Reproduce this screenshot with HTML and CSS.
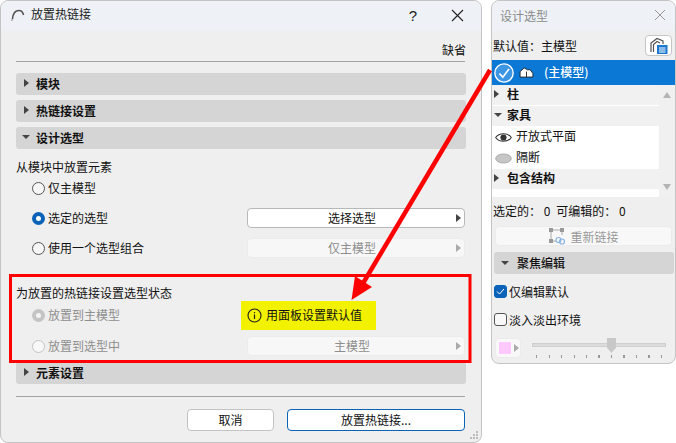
FILE: index.html
```html
<!DOCTYPE html>
<html lang="zh">
<head>
<meta charset="utf-8">
<link rel="stylesheet" href="styles.css">
</head>
<body>
<div class="desk">
  <section class="dialog">
    <header class="titlebar">
      <svg class="appicon" width="14" height="14" viewBox="0 0 14 14"><path d="M1.500 11 C2 5 5 2.500 8 2.500 C10.500 2.500 12 4.500 12.500 7" fill="none" stroke="#555" stroke-width="1.600"/><path d="M1 11 L1 13" stroke="#aaa" stroke-width="1.500"/></svg>
      <span class="title">放置热链接</span>
      <span class="help">?</span>
      <svg class="close" width="13" height="13" viewBox="0 0 13 13"><path d="M1 1 L12 12 M12 1 L1 12" stroke="#222" stroke-width="1.100"/></svg>
    </header>
    <div class="body">
      <div class="defaultrow">缺省</div>
      <div class="sep"></div>
      <div class="bars">
        <div class="bar"><i class="tri-r"></i>模块</div>
        <div class="bar"><i class="tri-r"></i>热链接设置</div>
        <div class="bar"><i class="tri-d"></i>设计选型</div>
      </div>
      <div class="label from">从模块中放置元素</div>
      <div class="optrow first"><span class="radio"></span><span>仅主模型</span></div>
      <div class="optrow"><span class="radio on"></span><span>选定的选型</span><button class="pick">选择选型<i class="tri-r"></i></button></div>
      <div class="optrow"><span class="radio"></span><span>使用一个选型组合</span><button class="pick off">仅主模型<i class="tri-r"></i></button></div>
      <div class="label state">为放置的热链接设置选型状态</div>
      <div class="optrow first2 dim"><span class="radio donut"></span><span>放置到主模型</span>
        <div class="notice"><svg width="15" height="15" viewBox="0 0 15 15"><circle cx="7.500" cy="7.500" r="6.500" fill="none" stroke="#222" stroke-width="1.100"/><path d="M7.500 6.500 V11 M7.500 4 V5.200" stroke="#222" stroke-width="1.200"/></svg><span>用面板设置默认值</span></div>
      </div>
      <div class="optrow second2 dim"><span class="radio blank"></span><span>放置到选型中</span><button class="pick off">主模型<i class="tri-r"></i></button></div>
      <div class="bar last"><i class="tri-r"></i>元素设置</div>
      <div class="sep low"></div>
      <div class="actions">
        <button class="btn cancel">取消</button>
        <button class="btn primary">放置热链接...</button>
      </div>
    </div>
    <svg class="grip" width="10" height="10" viewBox="0 0 10 10"><path d="M7 1h2v2H7zM4 4h2v2H4zM7 4h2v2H7zM1 7h2v2H1zM4 7h2v2H4zM7 7h2v2H7z" fill="#bbb"/></svg>
  </section>

  <aside class="panel">
    <header class="ptitle">
      <span>设计选型</span>
      <svg width="12" height="12" viewBox="0 0 12 12"><path d="M1 1 L11 11 M11 1 L1 11" stroke="#999" stroke-width="1"/></svg>
    </header>
    <div class="pbody">
      <div class="pdefault"><span>默认值：主模型</span>
        <button class="iconbtn"><svg width="20" height="20" viewBox="0 0 20 20"><path d="M2 16 V7 L8 2.500 L14 5 V8 M4.500 16 V8.500 L8 5.500 L11 7" fill="none" stroke="#555" stroke-width="1.200"/><rect x="8" y="9" width="10.500" height="9" fill="#1a78d0"/><path d="M10 12 H16.500 M10 14 H16.500 M10 16 H16.500" stroke="#fff" stroke-width="1"/></svg></button>
      </div>
      <div class="selrow">
        <svg width="22" height="22" viewBox="0 0 24 24"><circle cx="12" cy="12" r="10" fill="#3d96e4" stroke="#fff" stroke-width="1.500"/><path d="M7 12.500 L10.700 16.500 L17.500 7.500" fill="none" stroke="#fff" stroke-width="1.800"/></svg>
        <svg class="house" width="15" height="11" viewBox="0 0 16 12"><path d="M1 11 V5 L5.500 1 L9 3 H12 L15 7 V11 Z" fill="#fff" stroke="#222" stroke-width="1"/><path d="M8 11 V5" stroke="#222" stroke-width="1"/></svg>
        <span>(主模型)</span>
      </div>
      <div class="listwrap">
        <div class="list">
          <div class="group"><i class="tri-r"></i>柱</div>
          <div class="group"><i class="tri-d"></i>家具</div>
          <div class="item"><svg width="17" height="11" viewBox="0 0 17 11"><path d="M.700 5.500 C4 .500 13 .500 16.300 5.500 C13 10.500 4 10.500 .700 5.500 Z" fill="#fff" stroke="#333" stroke-width="1.100"/><circle cx="8.500" cy="5.500" r="3.100" fill="#333"/></svg>开放式平面</div>
          <div class="item"><svg width="17" height="11" viewBox="0 0 17 11"><ellipse cx="8.500" cy="5.500" rx="7.800" ry="4.500" fill="#c6c6c6" stroke="#aaa" stroke-width="1"/></svg>隔断</div>
          <div class="group"><i class="tri-r"></i>包含结构</div>
        </div>
        <div class="scroll"><i class="up"></i><i class="down"></i></div>
      </div>
      <div class="counts"><span>选定的： 0</span><span>可编辑的： 0</span></div>
      <button class="relink">
        <svg width="18" height="18" viewBox="0 0 18 18"><path d="M2.500 3 H14 M3 3 V14 H8 M14 3 V8" fill="none" stroke="#aaa" stroke-width="1"/><path d="M1 1h4v4H1zM12 1h4v4h-4zM1 12h4v4H1z" fill="#999"/><circle cx="10.500" cy="13" r="2.500" fill="none" stroke="#8ab4e0" stroke-width="1.200"/><circle cx="14" cy="14.500" r="2.500" fill="none" stroke="#8ab4e0" stroke-width="1.200"/></svg>
        <span>重新链接</span>
      </button>
      <div class="pbar"><i class="tri-d"></i>聚焦编辑</div>
      <div class="check one"><span class="box on"><svg width="13" height="13" viewBox="0 0 13 13"><path d="M3 6.500 L5.500 9 L10 4" fill="none" stroke="#fff" stroke-width="1"/></svg></span>仅编辑默认</div>
      <div class="check two"><span class="box"></span>淡入淡出环境</div>
      <div class="sliderrow">
        <div class="swatch"><b></b><i class="tri-r"></i></div>
        <div class="slider"><div class="track"></div><div class="thumb"></div><div class="ticks"></div></div>
      </div>
    </div>
  </aside>

  <svg class="annot" width="676" height="443" viewBox="0 0 676 443">
    <rect x="10.500" y="275.500" width="459.500" height="86" fill="none" stroke="#f00" stroke-width="3"/>
    <path d="M490 70 L362 285" stroke="#f00" stroke-width="4.500" fill="none"/>
    <path d="M351.500 300 L355 276 L372 287 Z" fill="#f00"/>
  </svg>
</div>
</body>
</html>
```

FILE: styles.css
```css
* { box-sizing: border-box; }
html, body { margin: 0; padding: 0; background: #fff; }
body { font-family: "Noto Sans CJK SC", "Liberation Sans", sans-serif; font-size: 12px; color: #111; }
button { font: inherit; color: inherit; padding: 0; }
.desk { position: relative; width: 676px; height: 443px; overflow: hidden; }

.dialog { position: absolute; left: 0; top: 0; width: 482px; height: 443px; background: #efefef; border: 1px solid #c4c4c4; border-radius: 8px; overflow: hidden; display: flex; flex-direction: column; }
.titlebar { height: 30px; flex: none; background: #eef2f7; display: flex; align-items: center; padding: 0 0 2px 10px; }
.appicon { margin-right: 6px; }
.title { font-size: 12px; color: #222; line-height: 16px; padding-bottom: 2px; }
.help { margin-left: auto; font-family: "Liberation Sans", sans-serif; font-size: 15px; margin-right: 34px; color: #222; }
.close { margin-right: 17px; }
.body { flex: 1; padding: 0 15px; display: flex; flex-direction: column; }
.defaultrow { height: 30px; text-align: right; line-height: 38px; font-size: 12px; }
.sep { height: 1px; background: #a4a4a4; width: 449px; flex: none; }
.bars { display: flex; flex-direction: column; gap: 5px; margin-top: 11px; }
.bar { height: 22px; width: 450px; background: #d5d5d5; border-radius: 3px; display: flex; align-items: center; font-weight: 700; font-size: 12px; flex: none; padding: 0 0 2px 8px; }
.bar i { margin-right: 7px; }
.tri-r { display: inline-block; width: 0; height: 0; border-left: 5px solid #444; border-top: 4px solid transparent; border-bottom: 4px solid transparent; }
.tri-d { display: inline-block; width: 0; height: 0; border-top: 4px solid #444; border-left: 4px solid transparent; border-right: 4px solid transparent; }
.bar .tri-r { margin-right: 7px; }
.bar .tri-d { margin-left: -2px; margin-right: 6px; }
.label { font-size: 12px; line-height: 18px; }
.from { margin-top: 9px; }
.state { margin-top: 25px; }
.optrow { height: 22px; margin-top: 8px; display: flex; align-items: center; padding-left: 16px; flex: none; width: 450px; position: relative; }
.optrow.first { margin-top: 1px; }
.optrow.first2 { margin-top: 2px; }
.optrow.second2 { margin-top: 9px; }
.optrow > span:nth-child(2) { margin-left: 3px; padding-bottom: 2px; }
.dim { color: #8e8e8e; }
.radio { width: 13px; height: 13px; border-radius: 50%; border: 1px solid #555; background: #f6f6f6; flex: none; }
.radio.on { border: 0; background: #0a63b8; position: relative; }
.radio.on::after { content: ""; position: absolute; left: 4px; top: 4px; width: 5px; height: 5px; border-radius: 50%; background: #fff; }
.radio.donut { border: 0; background: #c4c4c4; position: relative; }
.radio.donut::after { content: ""; position: absolute; left: 4px; top: 4px; width: 5px; height: 5px; border-radius: 50%; background: #f4f4f4; }
.radio.blank { border-color: #c4c4c4; background: #f8f8f8; }
.pick { margin-left: auto; margin-right: 1px; width: 218px; height: 20px; border: 1px solid #b8b8b8; border-radius: 4px; background: #fff; display: flex; align-items: center; justify-content: center; position: relative; font-size: 12px; padding: 0 8px 2px 0; }
.pick .tri-r { position: absolute; right: 3px; top: 5px; border-left-color: #444; }
.pick.off { background: #f7f7f7; border-color: #ebebeb; color: #8e8e8e; }
.pick.off .tri-r { border-left-color: #aaa; }
.notice { position: absolute; left: 225px; top: -3px; width: 135px; height: 29px; background: #f1f100; color: #111; display: flex; align-items: center; padding-left: 6px; gap: 4px; }
.notice span { padding-bottom: 2px; }
.last { margin-top: 5px; }
.low { margin-top: 12px; }
.actions { display: flex; margin-top: 12px; }
.btn { height: 22px; border-radius: 4px; background: #fff; font-size: 12px; padding-bottom: 2px; }
.cancel { width: 87px; margin-left: 171px; border: 1px solid #c2c2c2; }
.primary { width: 178px; margin-left: 13px; border: 1px solid #0a63b8; }
.grip { position: absolute; right: 2px; bottom: 2px; }

.panel { position: absolute; left: 491px; top: 0; width: 185px; height: 364px; background: #efefef; border: 1px solid #c4c4c4; border-radius: 8px; overflow: hidden; display: flex; flex-direction: column; }
.ptitle { height: 30px; flex: none; background: #eef2f7; display: flex; align-items: center; justify-content: space-between; padding: 0 9px 2px 8px; color: #8a8a8a; font-size: 12px; }
.pbody { flex: 1; display: flex; flex-direction: column; }
.pdefault { height: 29px; flex: none; display: flex; align-items: center; justify-content: space-between; padding: 0 3px 0 1px; font-size: 12px; }
.iconbtn { width: 27px; height: 21px; background: #fff; border: 1px solid #c6c6c6; border-radius: 4px; display: flex; align-items: center; justify-content: center; }
.selrow { height: 25px; flex: none; background: #0a78d4; color: #fff; display: flex; align-items: center; padding-left: 1px; font-size: 12px; font-weight: 500; }
.house { margin-left: 4px; margin-right: 10px; }
.selrow span { padding-bottom: 2px; }
.listwrap { height: 112px; flex: none; display: flex; background: #fff; }
.list { width: 167px; display: flex; flex-direction: column; gap: 1px; }
.group { height: 20px; background: #f1f1f1; display: flex; align-items: center; font-weight: 700; font-size: 12px; padding: 0 0 3px 2px; flex: none; }
.group .tri-r { margin-right: 8px; }
.group .tri-d { margin-right: 5px; }
.item { height: 20px; background: #fff; display: flex; align-items: center; padding: 0 0 3px 3px; gap: 4px; font-size: 12px; flex: none; }
.item svg { margin-top: 3px; }
.scroll { flex: 1; background: #f0f0f0; position: relative; }
.up { position: absolute; left: 4px; top: 7px; width: 0; height: 0; border-bottom: 6px solid #b4b4b4; border-left: 4px solid transparent; border-right: 4px solid transparent; }
.down { position: absolute; left: 4px; bottom: 7px; width: 0; height: 0; border-top: 6px solid #b4b4b4; border-left: 4px solid transparent; border-right: 4px solid transparent; }
.counts { height: 29px; flex: none; display: flex; align-items: center; gap: 6px; padding: 0 0 2px 1px; font-size: 12px; }
.relink { margin-left: 3px; width: 177px; height: 20px; flex: none; background: #f8f8f8; border: 1px solid #ebebeb; border-radius: 4px; display: flex; align-items: center; justify-content: center; gap: 4px; color: #999; font-size: 12px; }
.pbar { margin: 6px 2px 0; height: 22px; flex: none; width: 180px; background: #d5d5d5; border-radius: 3px; display: flex; align-items: center; font-weight: 500; font-size: 12px; padding: 0 0 1px 7px; }
.pbar i { margin-right: 8px; }
.check { height: 20px; flex: none; display: flex; align-items: center; padding-left: 2px; gap: 2px; font-size: 12px; }
.check.one { margin-top: 7px; }
.check.two { margin-top: 8px; }
.box { width: 13px; height: 13px; border: 1px solid #555; border-radius: 3px; background: #f8f8f8; flex: none; display: flex; }
.box.on { background: #0a63b8; border-color: #0a63b8; }
.box.on svg { margin: -1px; }
.sliderrow { display: flex; align-items: flex-start; margin-top: 9px; padding-left: 3px; flex: none; }
.swatch { width: 26px; height: 20px; background: #f8f8f8; border: 1px solid #ebebeb; border-radius: 4px; display: flex; align-items: center; padding-left: 3px; gap: 3px; flex: none; }
.swatch b { width: 12px; height: 12px; background: #ffc8ff; display: block; }
.swatch .tri-r { border-left-color: #aaa; }
.slider { position: relative; width: 134px; height: 24px; margin-left: 11px; }
.track { position: absolute; left: 0; right: 0; top: 5px; height: 4px; background: #dcdcdc; border: 1px solid #cfcfcf; }
.thumb { position: absolute; left: 75px; top: 0; width: 9px; height: 15px; background: #c8c8c8; clip-path: polygon(0 0, 100% 0, 100% 65%, 50% 100%, 0 65%); }
.ticks { position: absolute; left: 4px; right: 3px; top: 17px; height: 3px; background: repeating-linear-gradient(90deg, #999 0, #999 1px, transparent 1px, transparent 12.5px); }

.annot { position: absolute; left: 0; top: 0; pointer-events: none; }
```
